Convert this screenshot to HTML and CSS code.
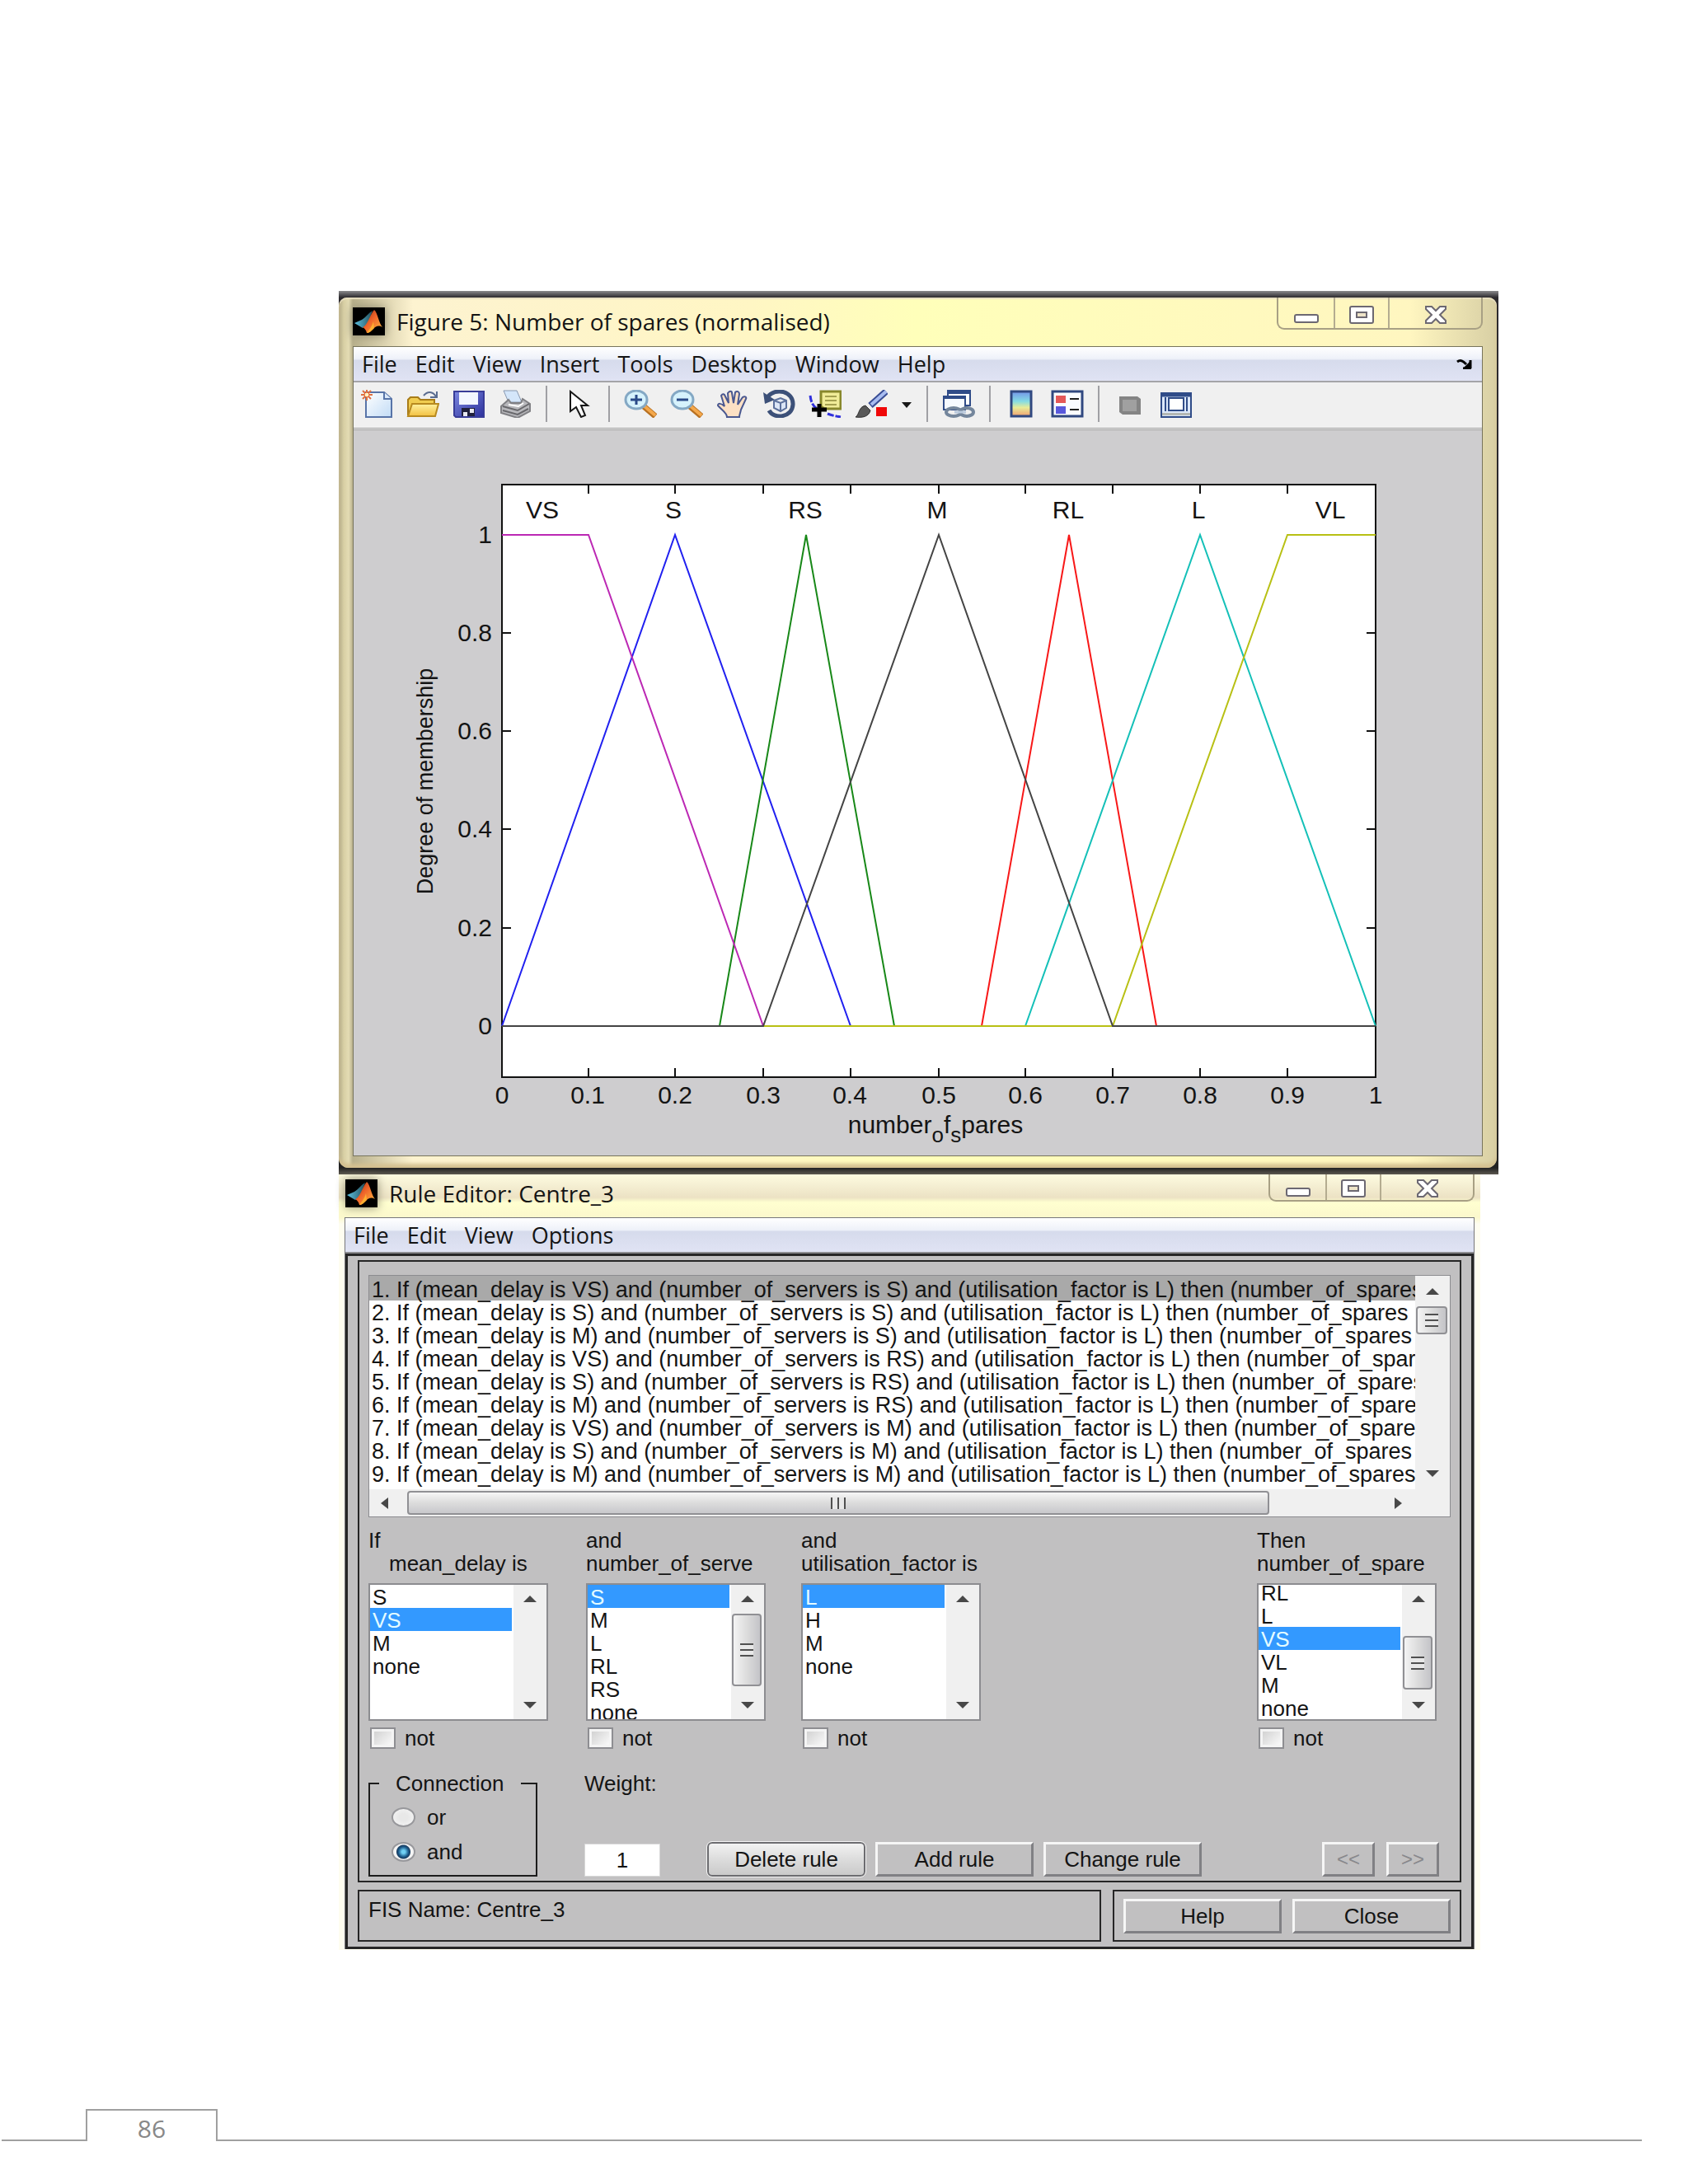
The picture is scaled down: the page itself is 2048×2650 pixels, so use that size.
FILE: index.html
```html
<!DOCTYPE html>
<html lang="en">
<head>
<meta charset="utf-8">
<title>Number of spares</title>
<link rel="stylesheet" href="styles.css">
</head>
<body>
<svg class="defs" aria-hidden="true">
  <defs>
    <linearGradient id="flame" x1="0" y1="0" x2="1" y2="1"><stop offset="0" stop-color="#8a2a10"/><stop offset=".45" stop-color="#f0642a"/><stop offset="1" stop-color="#ffc040"/></linearGradient>
    <linearGradient id="blade" x1="0" y1="0" x2="1" y2="0"><stop offset="0" stop-color="#5cc0e0"/><stop offset="1" stop-color="#24505c"/></linearGradient>
    <linearGradient id="paper" x1="0" y1="0" x2="1" y2="1"><stop offset="0" stop-color="#fff"/><stop offset="1" stop-color="#c2dcf6"/></linearGradient>
    <linearGradient id="folder" x1="0" y1="0" x2="0" y2="1"><stop offset="0" stop-color="#fff2a0"/><stop offset="1" stop-color="#f2c040"/></linearGradient>
    <linearGradient id="disk" x1="0" y1="0" x2="1" y2="1"><stop offset="0" stop-color="#7c88e0"/><stop offset="1" stop-color="#2c309c"/></linearGradient>
    <linearGradient id="spectrum" x1="0" y1="0" x2="0" y2="1"><stop offset="0" stop-color="#7494e8"/><stop offset=".4" stop-color="#84dce4"/><stop offset=".65" stop-color="#e8ec98"/><stop offset="1" stop-color="#f0a070"/></linearGradient>
    <symbol id="logo" viewBox="0 0 39 34"><path fill="#000" d="M0 0h39v34H0z"/><path fill="url(#blade)" d="M2 19l9-4C17 11 20 6 24 4l-6 16-6 5z"/><path fill="url(#flame)" d="M12 24c6-2 8-14 14-21 4 3 6 17 10 21-5-3-8-1-11 2-3 3-5 5-8 5-1-4-3-6-5-7z"/><path fill="#ffb030" d="M17 31c3-4 7-9 8-14l1 8c-3 3-6 6-9 6z"/></symbol>
    <symbol id="min" viewBox="0 0 30 22"><rect x="1" y="11" width="28" height="9" rx="2" fill="#fff" stroke="#6c6872" stroke-width="2"/></symbol>
    <symbol id="max" viewBox="0 0 30 22"><rect x="1" y="1" width="28" height="20" rx="2" fill="#fff" stroke="#6c6872" stroke-width="2"/><rect x="9" y="8" width="12" height="6" fill="#eee4c8" stroke="#6c6872" stroke-width="2"/></symbol>
    <symbol id="close" viewBox="0 0 30 22"><path d="M3 1h7l5 5 5-5h7v3l-7 7 7 7v3h-7l-5-5-5 5H3v-3l7-7-7-7z" fill="#fff" stroke="#6c6872" stroke-width="2"/></symbol>
  </defs>
</svg>

<main class="page">
  <section class="figure">
    <div class="frame">
      <header class="titlebar">
        <svg class="logo"><use href="#logo"/></svg>
        <h1 class="title">Figure 5: Number of spares (normalised)</h1>
        <div class="controls">
          <button aria-label="Minimise"><svg><use href="#min"/></svg></button>
          <button aria-label="Maximise"><svg><use href="#max"/></svg></button>
          <button class="wide" aria-label="Close window"><svg><use href="#close"/></svg></button>
        </div>
      </header>
      <div class="client">
        <nav class="menubar">
          <button>File</button><button>Edit</button><button>View</button><button>Insert</button><button>Tools</button><button>Desktop</button><button>Window</button><button>Help</button>
          <button class="dock" aria-label="Dock figure"><svg viewBox="0 0 20 12"><path d="M1 3C5 0 8 2 12 6M17 1v10M8 11h10" fill="none" stroke="#000" stroke-width="3"/><path d="M17 2v9H8z"/></svg></button>
        </nav>
        <div class="toolbar">
          <button aria-label="New figure"><svg viewBox="0 0 40 34"><path d="M7 3h22l9 8v22H7z" fill="url(#paper)" stroke="#5874a8" stroke-width="2"/><path d="M29 3v8h9" fill="#dceafa" stroke="#5874a8" stroke-width="2"/><path d="M8 0v13M1 6h14M3 1l10 10M13 1L3 11" stroke="#e07040" stroke-width="2"/><circle cx="8" cy="6" r="3" fill="#fff0c0" stroke="#e05828"/></svg></button>
          <button aria-label="Open"><svg viewBox="0 0 40 34"><path d="M2 31V12l3-3h9l3 3h17v5" fill="#f0cc50" stroke="#a87c18" stroke-width="2"/><path d="M2 32l5-15h32l-4 15z" fill="url(#folder)" stroke="#b88a20" stroke-width="2"/><path d="M21 7c5-6 11-5 15 1M37 2v7h-8" fill="none" stroke="#5a6c90" stroke-width="2"/></svg></button>
          <button aria-label="Save"><svg viewBox="0 0 40 34"><path d="M2 2h36v31H4l-2-2z" fill="url(#disk)" stroke="#383c98" stroke-width="2"/><path d="M8 3h23v15H8z" fill="#f2f6ff"/><path d="M11 22h16v10H11z" fill="#20203c"/><path d="M13 27h5v5h-5zM21 23h5v5h-5z" fill="#e8e8f0"/></svg></button>
          <button aria-label="Print"><svg viewBox="0 0 40 34"><path d="M6 1h16l6 14H12z" fill="#d4e6fa" stroke="#8898b0" stroke-width="1"/><path d="M3 20l9-8 3 4h12l2-5 9 6v9L23 34 3 28z" fill="#b8b8bc" stroke="#808084" stroke-width="2"/><path d="M5 20l18 5 14-8M5 25l18 5 13-7" fill="none" stroke="#68686c" stroke-width="2"/><path d="M12 18l12 2 6-4" stroke="#fff" stroke-width="2" fill="none"/></svg></button>
          <span class="sep"></span>
          <button aria-label="Edit plot"><svg viewBox="0 0 40 34"><path d="M11 2v24l7-5 6 12 5-2-5-12h8z" fill="#fff" stroke="#181818" stroke-width="2"/></svg></button>
          <span class="sep"></span>
          <button aria-label="Zoom in"><svg viewBox="0 0 40 34"><path d="M24 20l14 12" stroke="#b87020" stroke-width="7"/><path d="M25 20l13 11" stroke="#f4a84c" stroke-width="4"/><ellipse cx="15" cy="12" rx="13" ry="11" fill="#d6f2fc" stroke="#84a8c4" stroke-width="3"/><path d="M15 6v12M8 12h14" stroke="#2a4a88" stroke-width="3"/></svg></button>
          <button aria-label="Zoom out"><svg viewBox="0 0 40 34"><path d="M24 20l14 12" stroke="#b87020" stroke-width="7"/><path d="M25 20l13 11" stroke="#f4a84c" stroke-width="4"/><ellipse cx="15" cy="12" rx="13" ry="11" fill="#d6f2fc" stroke="#84a8c4" stroke-width="3"/><path d="M8 12h14" stroke="#2a4a88" stroke-width="3"/></svg></button>
          <button aria-label="Pan"><svg viewBox="0 0 40 34"><path d="M13 33c0-5-6-8-11-14 0-3 4-3 8 1L6 7c2-3 4-2 5 1l4 8-1-12c2-3 5-3 5 0l2 12 2-13c2-2 5-1 5 2l-2 13 6-9c3-2 5 0 4 2l-6 13c-1 5-2 6-2 9z" fill="#fce0c4" stroke="#4a5890" stroke-width="2"/></svg></button>
          <button aria-label="Rotate 3D"><svg viewBox="0 0 40 34"><path d="M6 9C16-4 38 2 37 18 36 34 14 36 8 25" fill="none" stroke="#3c5078" stroke-width="5"/><path d="M1 3l2 14 12-5z" fill="#3c5078"/><path d="M14 13l8-3 7 3v9l-7 4-8-4zM14 13l8 3 7-3M22 16v9" fill="#dce6f6" stroke="#5c709c" stroke-width="2"/></svg></button>
          <button aria-label="Data cursor"><svg viewBox="0 0 40 34"><path d="M15 2h24v21H19l-4-3z" fill="#f0ec98" stroke="#88882c" stroke-width="3"/><path d="M20 8h14M20 13h14M20 18h14" stroke="#a4a050" stroke-width="2"/><path d="M2 7c1 8 3 12 8 16M23 29c5 2 10 3 16 4" fill="none" stroke="#3030dc" stroke-width="3" stroke-dasharray="8 2"/><path d="M13 17v16M4 24h18" stroke="#000" stroke-width="5"/></svg></button>
          <button aria-label="Brush"><svg viewBox="0 0 40 34"><path d="M38 2L19 19" stroke="#384c94" stroke-width="8"/><path d="M38 2L20 18" stroke="#a8bcf0" stroke-width="4"/><path d="M1 33c5-3 3-12 12-14l6 6c-2 8-10 9-18 8z" fill="#585858" stroke="#303030"/><path d="M26 21h13v11H26z" fill="#f00808"/></svg></button>
          <button class="caret" aria-label="Brush options"><svg viewBox="0 0 30 34"><path d="M9 15h12l-6 7z" fill="#181818"/></svg></button>
          <span class="sep"></span>
          <button aria-label="Link plot"><svg viewBox="0 0 40 34"><path d="M7 1h27v18H7z" fill="#fff" stroke="#304c88" stroke-width="2"/><path d="M7 3h27" stroke="#304c88" stroke-width="4"/><path d="M2 8h26v16H2z" fill="#f6faff" stroke="#304c88" stroke-width="2"/><path d="M2 9h26" stroke="#304c88" stroke-width="4"/><ellipse cx="14" cy="27" rx="9" ry="5" fill="none" stroke="#74869c" stroke-width="4"/><ellipse cx="30" cy="27" rx="8" ry="5" fill="none" stroke="#74869c" stroke-width="4"/><path d="M15 27h14" stroke="#b8c8dc" stroke-width="3"/></svg></button>
          <span class="sep"></span>
          <button aria-label="Insert colorbar"><svg viewBox="0 0 40 34"><path d="M8 2h24v30H8z" fill="url(#spectrum)" stroke="#304880" stroke-width="3"/></svg></button>
          <button aria-label="Insert legend"><svg viewBox="0 0 40 34"><path d="M2 2h36v30H2z" fill="#fafcff" stroke="#304880" stroke-width="3"/><path d="M6 7h12v9H6z" fill="#e45858"/><path d="M6 20h12v9H6z" fill="#5858dc"/><path d="M23 11h11M23 24h11" stroke="#202020" stroke-width="2"/></svg></button>
          <span class="sep"></span>
          <button aria-label="Hide plot tools"><svg viewBox="0 0 40 34"><path d="M7 8h22l4 3v19H11l-4-3z" fill="#848484"/><path d="M11 12h17v14H11z" fill="#a0a0a0"/></svg></button>
          <button aria-label="Show plot tools"><svg viewBox="0 0 40 34"><path d="M2 4h36v29H2z" fill="#dce8fa" stroke="#304c88" stroke-width="2"/><path d="M2 6h36" stroke="#304c88" stroke-width="5"/><path d="M11 10h18v15H11z" fill="#fff" stroke="#304c88" stroke-width="2"/><path d="M7 9v17M33 9v17" stroke="#304c88" stroke-width="2"/><path d="M3 28h34v3H3z" fill="#b4b8b4"/></svg></button>
        </div>
        <svg class="plot" viewBox="0 0 1369 880" role="img" aria-label="Membership functions">
          <g transform="translate(180 66)">
            <path class="axes" d="M0 0h1060v719H0z"/>
            <path class="ticks" d="M105 0v11M210 0v11M317 0v11M423 0v11M530 0v11M635 0v11M741 0v11M847 0v11M953 0v11M105 719v-11M210 719v-11M317 719v-11M423 719v-11M530 719v-11M635 719v-11M741 719v-11M847 719v-11M953 719v-11M0 180h11M0 299h11M0 418h11M0 538h11M1060 180h-11M1060 299h-11M1060 418h-11M1060 538h-11"/>
            <path class="curve s" d="M0 657L210 61L423 657"/>
            <path class="curve rs" d="M264 657L369 61L476 657"/>
            <path class="curve rl" d="M582 657L688 61L794 657"/>
            <path class="curve l" d="M635 657L847 61L1060 657"/>
            <path class="curve vs" d="M0 61H105L317 657"/>
            <path class="curve vl" d="M317 657H741L953 61H1060"/>
            <path class="curve m" d="M0 657H317L530 61L741 657H1060"/>
            <g class="label mid">
              <text x="49" y="41">VS</text><text x="208" y="41">S</text><text x="368" y="41">RS</text><text x="528" y="41">M</text><text x="687" y="41">RL</text><text x="845" y="41">L</text><text x="1005" y="41">VL</text>
              <text x="0" y="751">0</text><text x="104" y="751">0.1</text><text x="210" y="751">0.2</text><text x="317" y="751">0.3</text><text x="422" y="751">0.4</text><text x="530" y="751">0.5</text><text x="635" y="751">0.6</text><text x="741" y="751">0.7</text><text x="847" y="751">0.8</text><text x="953" y="751">0.9</text><text x="1060" y="751">1</text>
              <text x="526" y="787">number<tspan class="sub" dy="11">o</tspan><tspan dy="-11">f</tspan><tspan class="sub" dy="11">s</tspan><tspan dy="-11">pares</tspan></text>
            </g>
            <g class="label end">
              <text x="-12" y="71">1</text><text x="-12" y="190">0.8</text><text x="-12" y="309">0.6</text><text x="-12" y="428">0.4</text><text x="-12" y="548">0.2</text><text x="-12" y="667">0</text>
            </g>
            <text class="ylabel" transform="translate(-84 360) rotate(-90)">Degree of membership</text>
          </g>
        </svg>
      </div>
    </div>
  </section>

  <section class="editor">
    <header class="titlebar">
      <svg class="logo"><use href="#logo"/></svg>
      <h2 class="title">Rule Editor: Centre_3</h2>
      <div class="controls">
        <button aria-label="Minimise"><svg><use href="#min"/></svg></button>
        <button aria-label="Maximise"><svg><use href="#max"/></svg></button>
        <button class="wide" aria-label="Close window"><svg><use href="#close"/></svg></button>
      </div>
    </header>
    <div class="shell">
      <nav class="menubar"><button>File</button><button>Edit</button><button>View</button><button>Options</button></nav>
      <form class="body">
        <div class="panel">
          <div class="rules">
            <select class="rulelist" size="9" aria-label="Rules">
              <option selected>1. If (mean_delay is VS) and (number_of_servers is S) and (utilisation_factor is L) then (number_of_spares</option>
              <option>2. If (mean_delay is S) and (number_of_servers is S) and (utilisation_factor is L) then (number_of_spares is</option>
              <option>3. If (mean_delay is M) and (number_of_servers is S) and (utilisation_factor is L) then (number_of_spares i</option>
              <option>4. If (mean_delay is VS) and (number_of_servers is RS) and (utilisation_factor is L) then (number_of_spare</option>
              <option>5. If (mean_delay is S) and (number_of_servers is RS) and (utilisation_factor is L) then (number_of_spares</option>
              <option>6. If (mean_delay is M) and (number_of_servers is RS) and (utilisation_factor is L) then (number_of_spares</option>
              <option>7. If (mean_delay is VS) and (number_of_servers is M) and (utilisation_factor is L) then (number_of_spares</option>
              <option>8. If (mean_delay is S) and (number_of_servers is M) and (utilisation_factor is L) then (number_of_spares i</option>
              <option>9. If (mean_delay is M) and (number_of_servers is M) and (utilisation_factor is L) then (number_of_spares i</option>
            </select>
            <div class="vbar"><i class="up"></i><span class="thumb short"></span><i class="down"></i></div>
            <div class="hbar"><i class="left"></i><span class="thumb across"></span><i class="right"></i></div>
            <div class="corner"></div>
          </div>
          <div class="terms">
            <div class="term">
              <label for="t1"><span>If</span><span class="indent">mean_delay is</span></label>
              <div class="listbox"><select id="t1" size="6"><option>S</option><option selected>VS</option><option>M</option><option>none</option></select><div class="vbar"><i class="up"></i><i class="down"></i></div></div>
              <label class="not"><input type="checkbox">not</label>
            </div>
            <div class="term">
              <label for="t2"><span>and</span><span>number_of_serve</span></label>
              <div class="listbox"><select id="t2" size="6"><option selected>S</option><option>M</option><option>L</option><option>RL</option><option>RS</option><option>none</option></select><div class="vbar"><i class="up"></i><span class="thumb tall"></span><i class="down"></i></div></div>
              <label class="not"><input type="checkbox">not</label>
            </div>
            <div class="term">
              <label for="t3"><span>and</span><span>utilisation_factor is</span></label>
              <div class="listbox"><select id="t3" size="6"><option selected>L</option><option>H</option><option>M</option><option>none</option></select><div class="vbar"><i class="up"></i><i class="down"></i></div></div>
              <label class="not"><input type="checkbox">not</label>
            </div>
            <div class="term">
              <label for="t4"><span>Then</span><span>number_of_spare</span></label>
              <div class="listbox scrolled"><select id="t4" size="6"><option>RL</option><option>L</option><option selected>VS</option><option>VL</option><option>M</option><option>none</option></select><div class="vbar"><i class="up"></i><span class="thumb low"></span><i class="down"></i></div></div>
              <label class="not"><input type="checkbox">not</label>
            </div>
          </div>
          <div class="actions">
            <fieldset class="connection">
              <legend>Connection</legend>
              <label><input type="radio" name="conn">or</label>
              <label><input type="radio" name="conn" checked>and</label>
            </fieldset>
            <div class="weight"><label for="w">Weight:</label><input id="w" type="text" value="1"></div>
            <div class="buttons">
              <button type="button" class="btn default">Delete rule</button>
              <button type="button" class="btn">Add rule</button>
              <button type="button" class="btn">Change rule</button>
            </div>
            <div class="pager">
              <button type="button" class="btn" disabled>&lt;&lt;</button>
              <button type="button" class="btn" disabled>&gt;&gt;</button>
            </div>
          </div>
        </div>
        <div class="bottom">
          <p class="status">FIS Name: Centre_3</p>
          <div class="ending"><button type="button" class="btn">Help</button><button type="button" class="btn">Close</button></div>
        </div>
      </form>
    </div>
  </section>
</main>
<footer class="folio"><span class="lead"></span><span class="number">86</span><span class="rest"></span></footer>
</body>
</html>
```
FILE: styles.css
```css
* { box-sizing: border-box; }
body { margin: 0; background: #fff; color: #141414; font: 26px/28px "Liberation Sans", Arial, sans-serif; }
button, input, select { font: inherit; color: inherit; margin: 0; }
.defs { position: absolute; width: 0; height: 0; }

.page { display: grid; grid-template-columns: 411fr 1407fr 230fr; padding-top: 353px; }
.figure, .editor { grid-column: 2; min-width: 0; }

/* Window chrome */
.figure { padding: 8px 2px 8px 0; background: linear-gradient(#8a8a8c, #2c2a2e 8px, #222 1064px, #5c5850); }
.frame { padding: 0 17px 14px; border-radius: 10px 10px 12px 12px; background: linear-gradient(90deg, #b0a988, #d8cfa4 6px, #e4dcb4 12px, #b8b08c 17px, #fdf3d0 90px, #fff6c4 500px, #ffffba 700px, #fff6c0 1300px, #d8cfa4); box-shadow: inset 0 2px 1px #e8dfc0, inset 0 -5px 4px #d4c090; }
.titlebar { display: flex; align-items: center; }
.figure .titlebar { height: 59px; padding-bottom: 2px; }
.logo { width: 39px; height: 34px; flex: none; margin-right: 14px; box-shadow: 0 0 12px #8c8870; }
.title { margin: 0; font: 28px/34px "Open Sans", "Noto Sans", sans-serif; white-space: nowrap; }
.controls { display: flex; align-self: flex-start; margin-left: auto; border: 2px solid #a8a084; border-top: 0; border-radius: 0 0 9px 9px; }
.controls button { width: 69px; height: 37px; padding: 5px 0 0; border: 0; border-right: 2px solid #b4ac90; background: none; }
.controls button + button { width: 66px; }
.controls button.wide { width: 111px; border-right: 0; }
.controls svg { display: block; width: 30px; height: 22px; margin: 0 auto; }
.client { border: 1px solid #77745c; background: #cecdcf; }
.menubar { display: flex; align-items: center; height: 41px; padding-left: 10px; gap: 22px; background: linear-gradient(#fff, #eef1f9 35%, #d6dbec 40%, #e0e3f4); }
.menubar button { padding: 0; border: 0; background: none; font: 27px/38px "Open Sans", "Noto Sans", sans-serif; }
.menubar .dock { margin-left: auto; margin-right: 11px; width: 20px; }
.dock svg { display: block; width: 20px; height: 12px; }
.toolbar { display: flex; align-items: center; height: 60px; padding-bottom: 4px; border-top: 2px solid #a4a4a8; border-bottom: 3px double #a0a0a0; background: #f0f0f0; }
.toolbar button { width: 56px; padding: 0; border: 0; background: none; }
.toolbar button.caret { width: 30px; }
.toolbar button svg { display: block; width: 40px; height: 34px; margin: 0 auto; }
.toolbar .caret svg { width: 30px; }
.sep { width: 2px; height: 44px; margin: 0 9px; background: #a0a0a4; }

/* Plot */
.plot { display: block; width: 100%; }
.axes { fill: #fff; stroke: #111; stroke-width: 2; }
.ticks { stroke: #111; stroke-width: 2; }
.curve { fill: none; stroke-width: 2; }
.s { stroke: #2020f0; }
.rs { stroke: #188818; }
.rl { stroke: #f81818; }
.l { stroke: #14c0b8; }
.vs { stroke: #bc28b4; }
.vl { stroke: #b8c014; }
.m { stroke: #444; }
.label { font-size: 30px; fill: #141414; }
.mid, .ylabel { text-anchor: middle; }
.end { text-anchor: end; }
.sub { font-size: 26px; }
.ylabel { font-size: 27px; fill: #141414; }

/* Rule editor */
.editor { margin-right: 22px; padding: 0 7px 1px; background: linear-gradient(#fdfbe0, #ece2c4 28px, #ffffd0 34px, #fbf8cc 52px, #fefdf0 60px); }
.editor .titlebar { height: 52px; padding: 0 0 6px 1px; }
.editor .controls button { height: 31px; padding-top: 2px; }
.shell { border: 1px solid #77777c; border-bottom: 0; background: #c8c8c8; }
.editor .menubar { height: 43px; border-bottom: 2px solid #8c8c90; }
.body { border: 3px solid #262626; padding: 5px 12px 6px; background: #c1c0c1; }
.panel, .status, .ending { border: 2px solid #262626; }
.panel { padding: 16px 11px 5px; }
.rules { display: grid; grid-template-columns: 1fr 42px; grid-template-rows: 259px 33px; border: 1px solid #8c8c90; background: #fff; }
select { border: 0; border-radius: 0; padding: 0; background: #fff; outline: 0; overflow: hidden; appearance: none; }
option { height: 28px; min-height: 0; padding: 0 0 0 3px; line-height: 28px; }
.rulelist { width: 100%; min-width: 0; height: 259px; font-size: 27px; }
.rulelist option:first-child { height: 30px; padding-top: 2px; }
.rulelist option:checked { background: linear-gradient(#a9a9a9, #a9a9a9); color: #141414; }
.vbar { position: relative; display: flex; flex-direction: column; align-items: center; justify-content: space-between; padding: 13px 0; background: #f0f0f0; }
.rules .vbar { padding: 15px 0; }
.hbar { display: flex; align-items: center; padding: 0 16px 0 14px; background: #f0f0f0; }
.corner { background: #f0f0f0; }
.vbar i, .hbar i { width: 0; height: 0; border: 0 solid transparent; }
.vbar .up { border-width: 0 8px 8px; border-bottom-color: #484848; }
.vbar .down { border-width: 8px 8px 0; border-top-color: #484848; }
.hbar .left { border-width: 7px 9px 7px 0; border-right-color: #484848; }
.hbar .right { border-width: 7px 0 7px 9px; border-left-color: #484848; margin-left: auto; }
.thumb { position: absolute; left: 1px; right: 3px; border: 2px solid #909094; border-radius: 4px; background: linear-gradient(90deg, #f4f4f4, #dcdcdc 50%, #c4c4c8); }
.thumb::after { content: ""; position: absolute; inset: 0; margin: auto; width: 16px; height: 16px; background: repeating-linear-gradient(#505050 0 2px, #e8e8e8 2px 7px); }
.short { top: 37px; height: 34px; }
.tall { top: 35px; height: 88px; }
.low { top: 62px; height: 65px; }
.thumb.across { position: relative; left: auto; right: auto; width: 80%; height: 29px; margin-left: 23px; max-width: 1046px; flex: 1; background: linear-gradient(#f6f6f6, #dcdcdc 50%, #c8c8cc); }
.across::after { width: 18px; height: 14px; background: repeating-linear-gradient(90deg, #505050 0 2px, #e8e8e8 2px 8px); }

.terms { display: grid; grid-template-columns: 264px 261px 1fr 218px; padding: 14px 17px 0 0; }
.term label span { display: block; white-space: nowrap; }
.term .indent { padding-left: 25px; }
.listbox { display: grid; grid-template-columns: 1fr 40px; width: 218px; height: 167px; margin-top: 10px; border: 2px solid #8c8c90; background: #fff; overflow: hidden; }
.listbox select { height: 168px; width: 100%; min-width: 0; }
.listbox.scrolled { align-content: end; align-items: end; }
.listbox option:checked { background: linear-gradient(90deg, #3399ff 172px, #fff 172px); color: #e4fcff; }
.listbox .vbar { height: 163px; }
.not { display: flex; align-items: center; gap: 11px; height: 26px; margin-top: 8px; padding-left: 2px; }
.not input { appearance: none; width: 31px; height: 26px; border: 2px solid #8e8e92; background: linear-gradient(135deg, #ccc, #fff); box-shadow: inset 0 0 0 3px #f4f4f4; }

.actions { display: flex; align-items: flex-end; margin-top: 28px; }
.connection { width: 205px; margin: 0; padding: 13px 0 14px 26px; border: 2px solid #1c1c1c; min-width: 0; }
.connection legend { margin-left: -15px; padding: 0 20px; }
.connection label { display: flex; align-items: center; gap: 14px; height: 28px; }
.connection label + label { margin-top: 14px; }
.connection input { appearance: none; width: 29px; height: 24px; border: 2px solid #98989c; border-radius: 50%; background: radial-gradient(#e8e8e8 30%, #f8f8f8); }
.connection input:checked { background: radial-gradient(circle, #70d0f4 0 2px, #1c5c8c 6px, #183c60 8px, #f4f4f4 9px); }
.weight { display: flex; flex-direction: column; justify-content: space-between; width: 92px; height: 127px; margin: 0 57px; white-space: nowrap; }
.weight input { width: 92px; height: 40px; padding: 0; border: 1px solid #d8d8d8; background: #fff; text-align: center; }
.buttons { display: flex; gap: 12px; }
.btn { width: 192px; height: 42px; padding: 0; border: 3px solid; border-color: #f6f6f6 #808084 #808084 #f6f6f6; background: #c1c0c1; white-space: nowrap; }
.btn.default { border: 2px solid #6c6c70; border-radius: 6px; outline: 1px solid #f4f4f4; background: linear-gradient(#f2f2f2, #dcdcdc 50%, #cacaca); }
.pager { display: flex; gap: 14px; margin-left: auto; padding-right: 14px; }
.pager .btn { width: 64px; color: #88888c; font-size: 24px; }
.bottom { display: flex; gap: 14px; margin-top: 9px; }
.status { flex: 1; margin: 0; padding: 8px 11px; }
.ending { display: flex; gap: 13px; padding: 9px 11px 8px; }

/* Page number */
.folio { display: flex; align-items: flex-end; margin: 193px 56px 52px 2px; }
.lead { width: 102px; border-bottom: 2px solid #a0a0a0; }
.number { width: 160px; height: 39px; padding-top: 6px; border: 2px solid #a0a0a0; border-bottom: 0; text-align: center; color: #888; font: 30px/32px "Open Sans", "Noto Sans", sans-serif; }
.rest { flex: 1; border-bottom: 2px solid #a0a0a0; }
```
